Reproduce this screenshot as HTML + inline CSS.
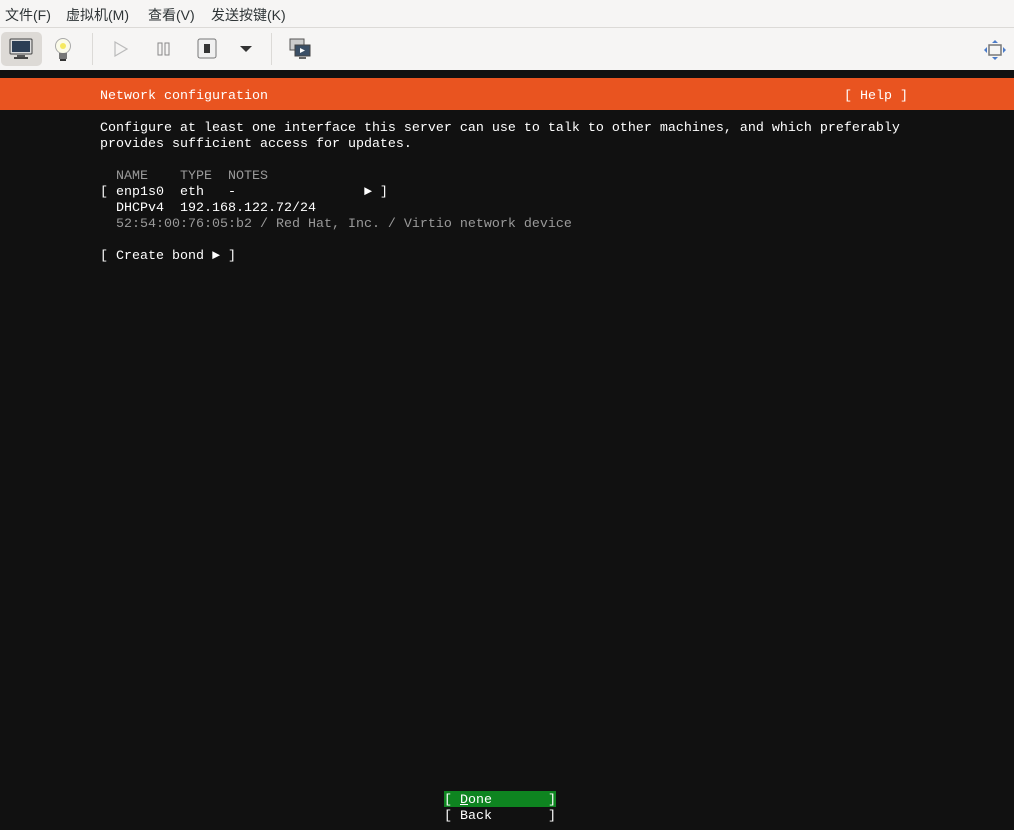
<!DOCTYPE html>
<html><head><meta charset="utf-8"><style>
*{margin:0;padding:0;box-sizing:border-box}
body{width:1014px;height:830px;background:#111;overflow:hidden;position:relative;font-family:"Liberation Sans","Noto Sans CJK SC",sans-serif}
#menu{position:absolute;left:0;top:0;width:1014px;height:28px;background:#f6f5f4;border-bottom:1px solid #dcdad7;font-size:14px;color:#2e3436}
#menu span{position:absolute;top:5px}
#tb{position:absolute;left:0;top:28px;width:1014px;height:42px;background:#f6f5f4}
.sep{position:absolute;top:5px;width:1px;height:32px;background:#dcdad7}
#band{position:absolute;left:0;top:78px;width:1014px;height:32px;background:#e95420}
.t{position:absolute;font-family:"Liberation Mono",monospace;font-size:13.33px;line-height:16px;color:#fff;white-space:pre}
.g{color:#9a9a9a}
</style></head><body>
<div id="menu">
<span style="left:5px">文件(F)</span><span style="left:66px">虚拟机(M)</span><span style="left:148px">查看(V)</span><span style="left:211px">发送按键(K)</span>
</div>
<div id="tb">
<div style="position:absolute;left:1px;top:4px;width:41px;height:34px;background:#dddad6;border-radius:5px"></div>
<svg style="position:absolute;left:9px;top:10px" width="24" height="22"><rect x="1" y="1" width="22" height="15" rx="1" fill="#ddd" stroke="#444"/><rect x="3" y="3" width="18" height="11" fill="#2c3e55"/><rect x="8" y="17" width="8" height="2" fill="#555"/><rect x="5" y="19" width="14" height="2" fill="#444"/></svg>
<svg style="position:absolute;left:54px;top:9px" width="18" height="25"><circle cx="9" cy="9" r="7.5" fill="#fbfbe8" stroke="#aaa"/><circle cx="9" cy="9" r="3" fill="#f5e960"/><rect x="5" y="16" width="8" height="6" fill="#777"/><rect x="6" y="22" width="6" height="2" fill="#333"/></svg>
<div class="sep" style="left:92px"></div>
<svg style="position:absolute;left:113px;top:13px" width="16" height="16"><path d="M2 1 L14 8 L2 15 Z" fill="none" stroke="#bbb" stroke-width="1.2"/></svg>
<svg style="position:absolute;left:157px;top:14px" width="14" height="14"><rect x="1" y="1" width="4" height="12" fill="none" stroke="#888"/><rect x="8" y="1" width="4" height="12" fill="none" stroke="#888"/></svg>
<svg style="position:absolute;left:197px;top:10px" width="20" height="22"><rect x="1" y="1" width="18" height="19" rx="2" fill="#f0f0f0" stroke="#777"/><rect x="7" y="6" width="6" height="9" fill="#333"/></svg>
<svg style="position:absolute;left:239px;top:17px" width="14" height="8"><path d="M1 1 L13 1 L7 7 Z" fill="#333"/></svg>
<div class="sep" style="left:271px"></div>
<svg style="position:absolute;left:289px;top:10px" width="22" height="22"><rect x="1" y="1" width="14" height="11" fill="#ccc" stroke="#555"/><rect x="6" y="7" width="15" height="11" fill="#3b4f66" stroke="#444"/><path d="M11 10 L16 12.5 L11 15Z" fill="#fff"/><rect x="10" y="19" width="7" height="2" fill="#666"/></svg>
<svg style="position:absolute;left:983px;top:11px" width="24" height="22"><rect x="6" y="6" width="12" height="10" fill="#f4f4f4" stroke="#777" stroke-width="1.5"/><path d="M12 1 L15 4 L9 4Z M12 21 L15 18 L9 18Z M1 11 L4 8 L4 14Z M23 11 L20 8 L20 14Z" fill="#4a7bc9"/></svg>
</div>
<div id="band"></div>
<div class="t" style="left:100px;top:89px">Network configuration</div>
<div class="t" style="left:844px;top:89px">[ Help ]</div>
<div class="t" style="left:100px;top:121px">Configure at least one interface this server can use to talk to other machines, and which preferably
provides sufficient access for updates.</div>
<div class="t g" style="left:100px;top:169px">  NAME    TYPE  NOTES</div>
<div class="t" style="left:100px;top:185px">[ enp1s0  eth   -                ► ]
  DHCPv4  192.168.122.72/24</div>
<div class="t g" style="left:100px;top:217px">  52:54:00:76:05:b2 / Red Hat, Inc. / Virtio network device</div>
<div class="t" style="left:100px;top:249px">[ Create bond ► ]</div>
<div style="position:absolute;left:444px;top:791px;width:112px;height:16px;background:#0e8420"></div>
<div class="t" style="left:444px;top:793px">[ <u>D</u>one       ]
[ Back       ]</div>
</body></html>
